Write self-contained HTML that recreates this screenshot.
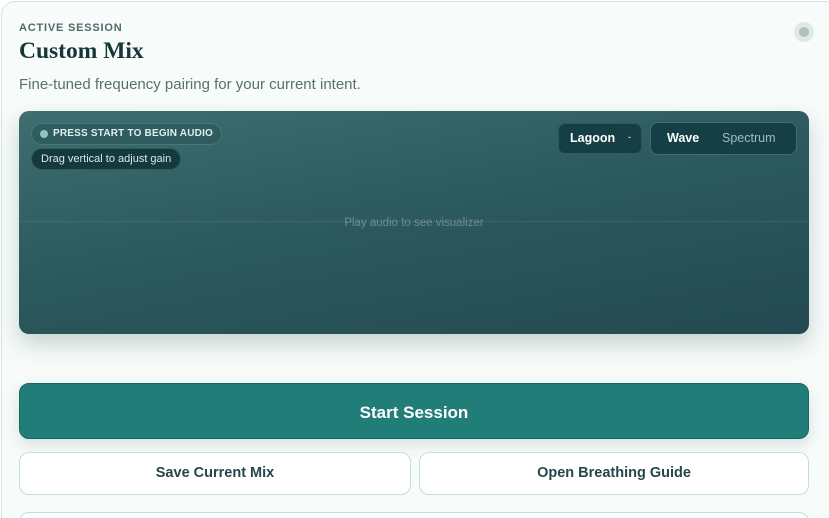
<!DOCTYPE html>
<html><head><meta charset="utf-8"><style>
*{box-sizing:border-box;margin:0;padding:0}
html,body{width:829px;height:518px;overflow:hidden}
body{background:#fff;font-family:"Liberation Sans",sans-serif;position:relative}
.card{position:absolute;left:1px;top:1px;width:840px;height:540px;border:1px solid #cfe5e0;border-radius:14px;background:#f7fbfa}
.lbl{position:absolute;left:19px;top:22px;font-size:11px;font-weight:bold;letter-spacing:0.8px;color:#4d6a6c}
h1{position:absolute;left:19px;top:38px;font-family:"Liberation Serif",serif;font-size:23.5px;font-weight:bold;color:#173638}
.sub{position:absolute;left:19px;top:76px;font-size:15px;color:#5a6f70}
.dot{position:absolute;left:794px;top:22px;width:20px;height:20px;border-radius:50%;background:#dde9e7}
.dot:after{content:"";position:absolute;left:5px;top:5px;width:10px;height:10px;border-radius:50%;background:#b3bdbf}
.viz{position:absolute;left:19px;top:111px;width:790px;height:223px;border-radius:10px;background:linear-gradient(170deg,#3f6e70 0%,#2c5a5e 45%,#234a51 100%);box-shadow:0 10px 22px rgba(30,70,70,.22)}
.line{position:absolute;left:0;right:0;top:110px;height:1px;background:rgba(255,255,255,.08)}
.ph{position:absolute;left:0;right:0;top:106px;text-align:center;font-size:11.5px;color:rgba(255,255,255,.3)}
.pill1{position:absolute;left:12px;top:12px;height:22px;padding:0 8px 0 21px;border-radius:11px;background:#2e5c5f;border:1px solid #48777a;color:#e2eeee;font-size:10px;font-weight:bold;letter-spacing:.2px;line-height:20px}
.pill1:before{content:"";position:absolute;left:8px;top:6px;width:8px;height:8px;border-radius:50%;background:#94c2bf}
.pill2{position:absolute;left:12px;top:37px;height:22px;padding:0 9px;border-radius:11px;background:#143a40;border:1px solid #2f5a5e;color:#dce9e9;font-size:11px;line-height:20px}
.sel{position:absolute;left:539px;top:12px;width:84px;height:31px;border-radius:7px;background:#163e45;border:1px solid #2e5a5e;color:#fff;font-size:12.5px;font-weight:bold;line-height:29px;padding-left:11px}
.sel:after{content:"-";position:absolute;right:10px;top:-1px;font-size:9px;color:#b7cccc}
.tog{position:absolute;left:631px;top:11px;width:147px;height:33px;border-radius:8px;background:#163e45;border:1px solid #3f6e70;font-size:12.5px;line-height:31px}
.tog span{position:absolute}
.b2{position:absolute;top:452px;height:43px;border-radius:10px;background:#fff;border:1px solid #c5dedb;color:#25474a;font-size:14.5px;font-weight:bold;text-align:center;line-height:41px}
</style></head><body>
<div class="card"></div>
<div class="lbl">ACTIVE SESSION</div>
<h1>Custom Mix</h1>
<div class="sub">Fine-tuned frequency pairing for your current intent.</div>
<div class="dot"></div>
<div class="viz">
<div class="line"></div>
<div class="ph">Play audio to see visualizer</div>
<div class="pill1">PRESS START TO BEGIN AUDIO</div>
<div class="pill2">Drag vertical to adjust gain</div>
<div class="sel">Lagoon</div>
<div class="tog"><span style="left:16px;color:#fff;font-weight:bold">Wave</span><span style="left:71px;color:#9fbdbd">Spectrum</span></div>
</div>
<div style="position:absolute;left:19px;top:383px;width:790px;height:56px;border-radius:10px;background:#217d78;border:1px solid #1b6662;box-shadow:0 6px 14px rgba(30,80,80,.15);color:#fff;font-size:17px;font-weight:bold;text-align:center;line-height:58px">Start Session</div>
<div class="b2" style="left:19px;width:392px">Save Current Mix</div>
<div class="b2" style="left:419px;width:390px">Open Breathing Guide</div>
<div style="position:absolute;left:19px;top:512px;width:790px;height:43px;border-radius:10px;background:#fff;border:1px solid #c5dedb"></div>
</body></html>
